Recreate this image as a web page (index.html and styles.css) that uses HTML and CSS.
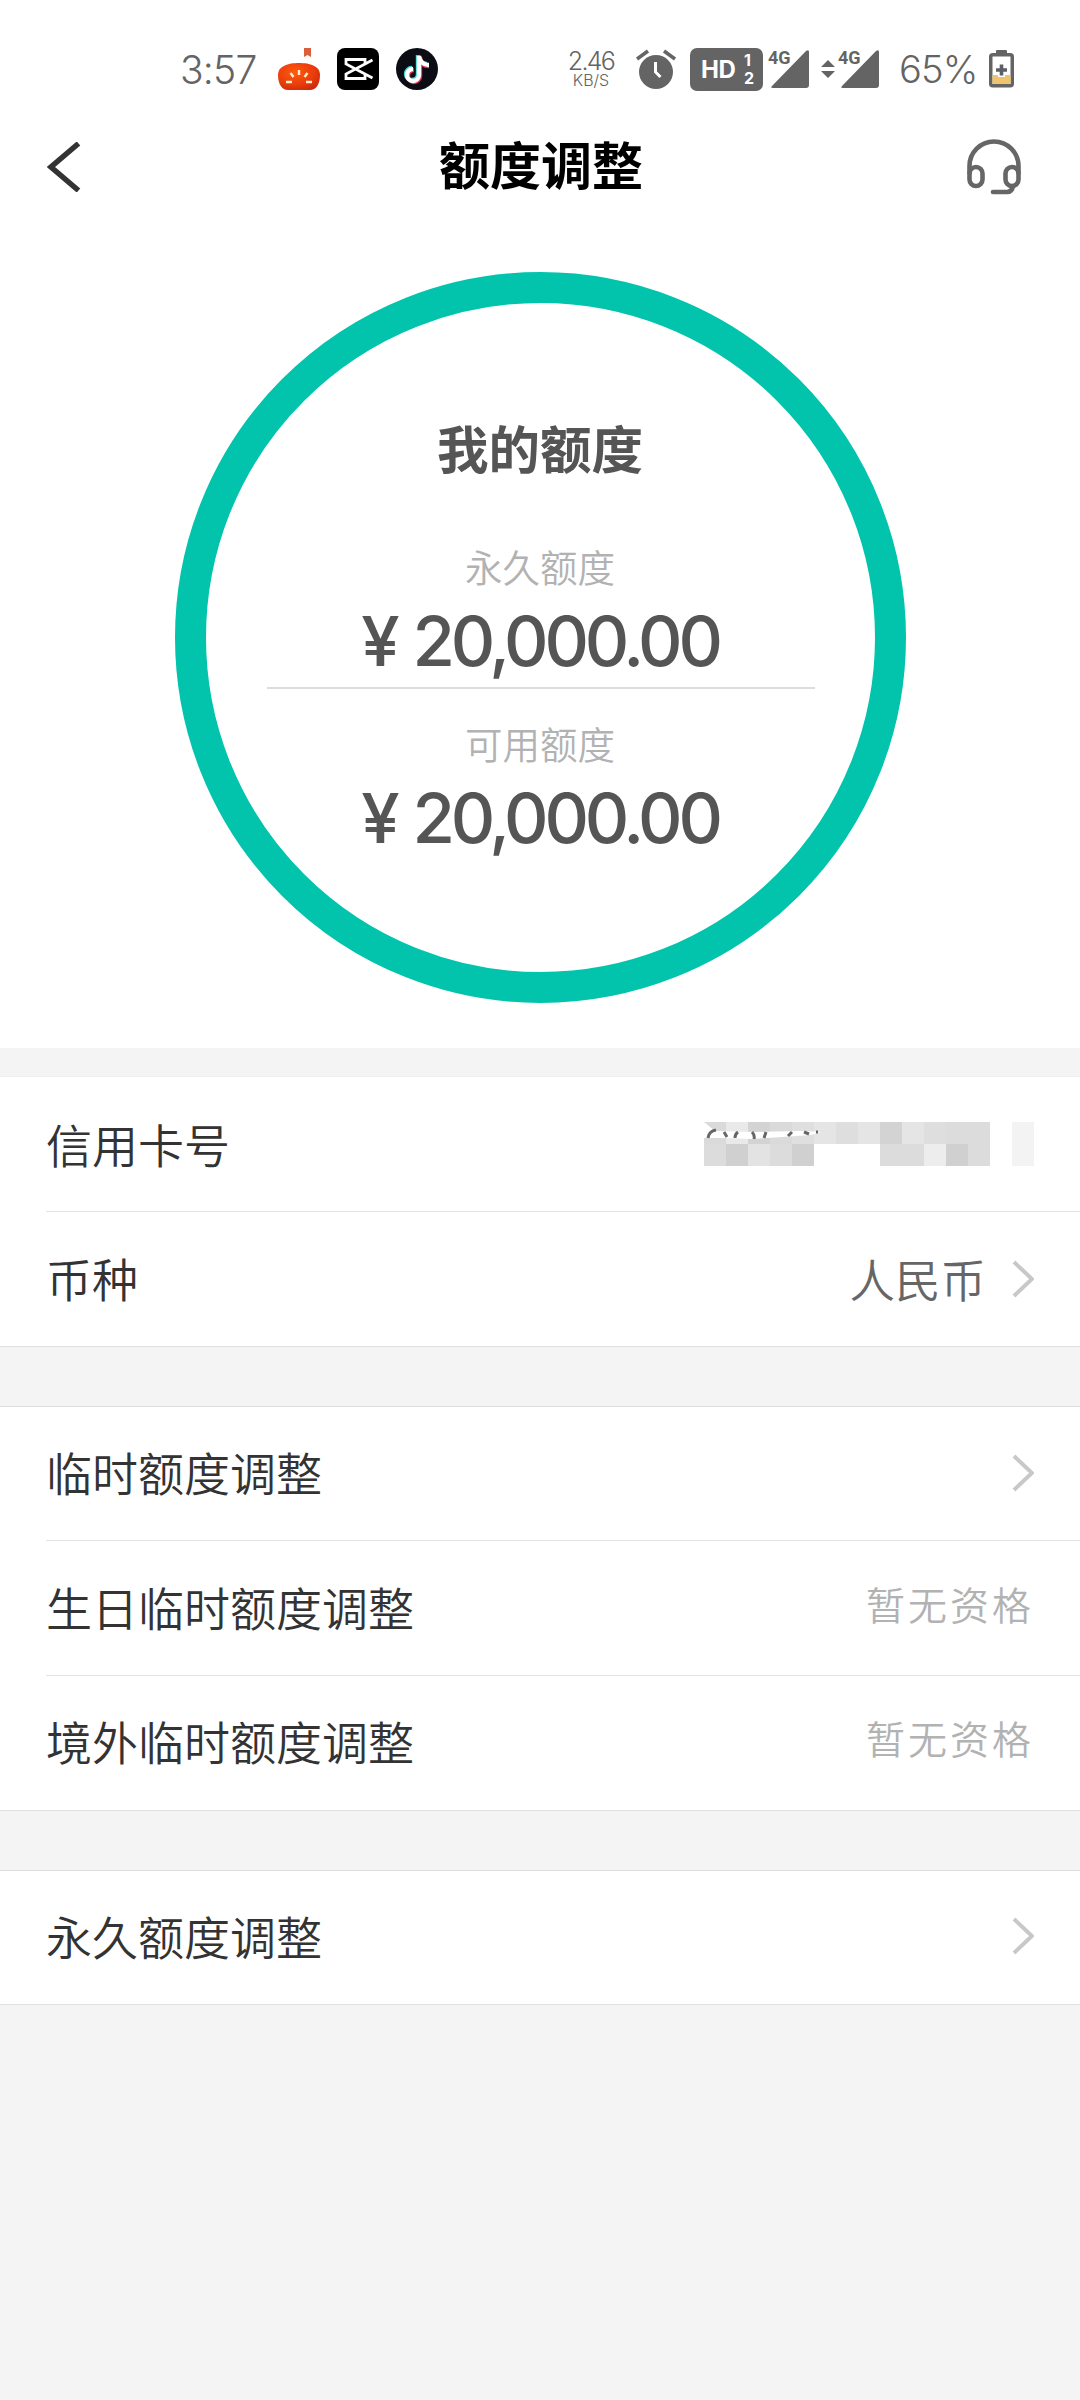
FILE: index.html
```html
<!DOCTYPE html>
<html lang="zh-CN">
<head>
<meta charset="utf-8">
<title>额度调整</title>
<link rel="stylesheet" href="styles.css">
</head>
<body>
<div class="status">
  <span class="clock">3:57</span>
  <svg class="app pumpkin" viewBox="0 0 42 42">
    <defs><radialGradient id="pk" cx=".4" cy=".35" r=".75"><stop offset="0" stop-color="#ff5a0c"/><stop offset=".6" stop-color="#ea3d0c"/><stop offset="1" stop-color="#c9290a"/></radialGradient></defs>
    <path d="M26 0h7v9l-3.500-2-3.500 2z" fill="#d9603a"/>
    <path d="M0 27C0 18 10 15 21 15s21 3 21 12c0 9-4 15-10 15H10C4 42 0 36 0 27z" fill="url(#pk)"/>
    <path d="M21 22v5M12.500 25l3 4M29.500 25l-3 4M8 34h6M34 34h-6" stroke="#fff0cc" stroke-width="2.400"/>
  </svg>
  <svg class="app capcut" viewBox="0 0 42 42">
    <rect width="42" height="42" rx="8" fill="#000"/>
    <path d="M35.500 12L9 26v4.500h19V27M35.500 30L9 16v-4.500h19V15" fill="none" stroke="#fff" stroke-width="2.800"/>
  </svg>
  <svg class="app tiktok" viewBox="0 0 42 42">
    <circle cx="21" cy="21" r="21" fill="#0b0c14"/>
    <g fill="none" stroke-width="4.400">
      <path d="M22 7v19a6 6 0 1 1-6-6M22 8c1 5 4 8 9 8" stroke="#35d9d3"/>
      <path d="M24 9v19a6 6 0 1 1-6-6M24 10c1 5 4 8 9 8" stroke="#ee2d57"/>
      <path d="M23 8v19a6 6 0 1 1-6-6M23 8c1 6 4 9 10 9" stroke="#fff"/>
    </g>
  </svg>
  <div class="speed"><span class="rate">2.46</span><span class="unit">KB/S</span></div>
  <svg class="alarm" viewBox="0 0 40 40" fill="none">
    <circle cx="20" cy="23" r="17" fill="#646464"/>
    <path d="M1 10L12 2M39 10L28 2" stroke="#646464" stroke-width="3.600"/>
    <path d="M19.500 13v10l5 5" stroke="#fff" stroke-width="3"/>
  </svg>
  <div class="hd"><span class="hd-name">HD</span><span class="hd-sims"><span>1</span><span>2</span></span></div>
  <div class="signal"><span class="net">4G</span>
    <svg class="bars" viewBox="0 0 38 38"><path d="M38 2v33q0 3-3 3H2q-3 0-1-2L35 1q3-2 3 1z" fill="#646464"/></svg></div>
  <svg class="updown" viewBox="0 0 14 18"><path d="M7 0l7 7H0zM7 18l7-7H0z" fill="#646464"/></svg>
  <div class="signal"><span class="net">4G</span>
    <svg class="bars" viewBox="0 0 38 38"><path d="M38 2v33q0 3-3 3H2q-3 0-1-2L35 1q3-2 3 1z" fill="#646464"/></svg></div>
  <span class="percent">65%</span>
  <svg class="battery" viewBox="0 0 25 38">
    <rect x="7" width="11" height="5" rx="1" fill="#646464"/>
    <rect x="1.750" y="4.750" width="21.500" height="31" rx="2" fill="#fff" stroke="#646464" stroke-width="3.500"/>
    <path d="M3.500 25h18v9h-18z" fill="#efc46c"/>
    <path d="M12.500 13v14M5.500 20h14" stroke="#fff" stroke-width="7"/>
    <path d="M12.500 14.500v11M7 20h11" stroke="#5c5f6a" stroke-width="3.600"/>
  </svg>
</div>
<header class="nav">
  <svg class="back" viewBox="0 0 34 50"><path d="M31.500 1.500L4 25l27.500 23.500" fill="none" stroke="#333" stroke-width="5.400"/></svg>
  <h1 class="title">额度调整</h1>
  <svg class="headset" viewBox="0 0 54 56" fill="none" stroke="#666" stroke-width="4.600">
    <path d="M2.500 35V27a24.500 24.500 0 0 1 49 0v8"/>
    <rect x="2.500" y="28" width="13" height="19" rx="6.500"/>
    <rect x="38.500" y="28" width="13" height="19" rx="6.500"/>
    <path d="M46 47q-1 6-6 6H26" stroke-linecap="round"/>
  </svg>
</header>
<main>
  <section class="summary">
    <div class="ring">
      <h2 class="ring-title">我的额度</h2>
      <div class="caption">永久额度</div>
      <div class="amount"><span class="yen">¥</span>20,000.00</div>
      <div class="rule"></div>
      <div class="caption">可用额度</div>
      <div class="amount"><span class="yen">¥</span>20,000.00</div>
    </div>
  </section>
  <section class="group group-card">
    <div class="row"><span class="label">信用卡号</span>
      <svg class="masked" viewBox="0 0 330 44" shape-rendering="crispEdges">
        <path d="M0 0h22v22H0zM66 0h22v22H66z" fill="#dadada"/><path d="M22 0h22v22H22z" fill="#e9e9e9"/><path d="M44 0h22v22H44z" fill="#d3d3d3"/>
        <path d="M88 0h22v22H88z" fill="#dfdfdf"/><path d="M110 0h22v22h-22zM154 0h22v22h-22zM198 0h22v22h-22z" fill="#e5e5e5"/>
        <path d="M132 0h22v22h-22zM220 0h22v22h-22z" fill="#dedede"/><path d="M176 0h22v22h-22z" fill="#d3d3d3"/><path d="M242 0h44v22h-44z" fill="#dcdcdc"/>
        <path d="M0 22h22v22H0zM66 22h22v22H66zM176 22h44v22h-44zM264 22h22v22h-22z" fill="#dcdcdc"/>
        <path d="M22 22h22v22H22zM88 22h22v22H88zM242 22h22v22h-22z" fill="#d0d0d0"/><path d="M44 22h22v22H44z" fill="#e3e3e3"/><path d="M220 22h22v22h-22z" fill="#ededed"/>
        <path d="M308 0h22v44h-22z" fill="#f3f3f3"/>
        <g shape-rendering="auto">
          <path d="M0 0L11 9l40 1 50-1 16 1-10 3-43 3-17 1-24-1H0z" fill="#fff"/>
          <path d="M4 16q1-7 8-8M20 10l3 5M31 16q0-4 3-6M48 10q3 3 2 7M62 10l-2 6M84 14l4-4M100 10l5 2M112 10h2" fill="none" stroke="#666" stroke-width="3"/>
        </g>
      </svg></div>
    <div class="row"><span class="label">币种</span><span class="value">人民币</span><svg class="chevron" viewBox="0 0 22 38"><path d="M2 2l18 17L2 36" fill="none" stroke="#c8c8c8" stroke-width="4"/></svg></div>
  </section>
  <section class="group">
    <div class="row"><span class="label">临时额度调整</span><svg class="chevron" viewBox="0 0 22 38"><path d="M2 2l18 17L2 36" fill="none" stroke="#c8c8c8" stroke-width="4"/></svg></div>
    <div class="row"><span class="label">生日临时额度调整</span><span class="note">暂无资格</span></div>
    <div class="row"><span class="label">境外临时额度调整</span><span class="note">暂无资格</span></div>
  </section>
  <section class="group">
    <div class="row"><span class="label">永久额度调整</span><svg class="chevron" viewBox="0 0 22 38"><path d="M2 2l18 17L2 36" fill="none" stroke="#c8c8c8" stroke-width="4"/></svg></div>
  </section>
</main>
</body>
</html>
```

FILE: styles.css
```css
* { box-sizing: border-box; margin: 0; padding: 0; }
body {
  width: 1080px; min-height: 2400px; background: #f4f4f4; color: #333;
  font-family: Inter, "Noto Sans CJK SC", sans-serif; font-weight: 350;
}
svg { display: block; flex: none; }

.status { display: flex; align-items: center; height: 138px; padding-left: 180px; background: #fff; color: #646464; font-weight: 300; white-space: nowrap; }
.clock { width: 98px; font-size: 39px; letter-spacing: -0.8px; }
.app { width: 42px; height: 42px; }
.capcut, .tiktok { margin-left: 17px; }
.speed { display: flex; flex-direction: column; align-items: center; width: 46px; margin-left: 130px; }
.rate { font-size: 25px; line-height: 21px; letter-spacing: -1.7px; }
.unit { font-size: 16px; line-height: 16px; }
.alarm { width: 40px; height: 40px; margin-left: 22px; }
.hd { display: flex; align-items: center; justify-content: space-between; width: 73px; height: 43px; margin-left: 14px; padding: 0 9px 0 11px; border-radius: 7px; background: #646464; color: #fff; font-weight: 700; }
.hd-name { font-size: 24px; letter-spacing: -0.5px; }
.hd-sims { display: flex; flex-direction: column; font-size: 16px; line-height: 18px; }
.signal { position: relative; width: 41px; height: 38px; margin-left: 5px; }
.net { position: absolute; left: 0; top: 0; font: 700 18px/16px Roboto, sans-serif; }
.bars { width: 38px; height: 38px; margin-left: 3px; }
.updown { width: 14px; height: 18px; margin-left: 12px; }
.updown + .signal { margin-left: 3px; }
.percent { width: 90px; margin-left: 20px; font-size: 38px; letter-spacing: -0.8px; }
.battery { width: 25px; height: 38px; }

.nav { display: flex; align-items: center; justify-content: space-between; height: 58px; padding: 0 59px 0 47px; background: #fff; }
.back { width: 34px; height: 50px; }
.title { width: 220px; margin-left: 34px; font-size: 51px; font-weight: 700; line-height: 60px; color: #000; text-align: center; }
.headset { width: 54px; height: 56px; }

.summary { display: flex; justify-content: center; height: 852px; padding-top: 76px; background: #fff; }
.ring { display: flex; flex-direction: column; align-items: center; width: 731px; height: 731px; padding-top: 117px; border: 31px solid #02c4ad; border-radius: 50%; color: #555; }
.ring-title { margin-bottom: 62px; font-size: 51.500px; font-weight: 700; line-height: 60px; }
.caption { font-size: 37.500px; line-height: 54px; color: #b2b2b2; }
.amount { height: 92px; font-size: 69px; font-weight: 500; line-height: 90px; letter-spacing: -4.200px; white-space: nowrap; }
.yen { margin-right: 17px; }
.rule { width: 548px; height: 2px; margin: -1px 0 30px 1px; background: #ddd; }

.group { margin-top: 59px; border-top: 1px solid #ddd; background: #fff; }
.group-card { margin-top: 28px; border-top-color: #f0f0f0; }
.row { display: flex; align-items: center; height: 135px; padding: 0 46px; background: linear-gradient(#e3e3e3, #e3e3e3) 46px 100% / 1034px 1px no-repeat; }
.row:first-child { height: 134px; }
.group-card .row { height: 135px; }
.row:last-child { border-bottom: 1px solid #e0e0e0; background: none; }
.label { margin-right: auto; font-size: 46px; line-height: 60px; }
.group-card .label { padding-top: 2px; }
.value { margin-right: 26px; padding-bottom: 2px; font-size: 45.500px; color: #666; }
.note { padding-bottom: 12px; font-size: 39px; letter-spacing: 3px; color: #b2b2b2; }
.chevron { width: 22px; height: 38px; margin-bottom: 3px; }
.value + .chevron { margin-bottom: 0; }
.masked { width: 330px; height: 44px; margin-bottom: 1px; }
```
